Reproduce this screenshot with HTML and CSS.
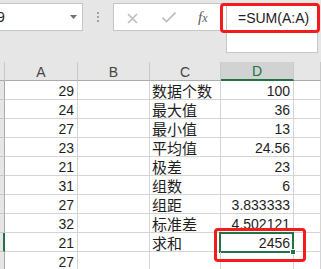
FILE: index.html
```html
<!DOCTYPE html>
<html lang="zh-CN">
  <head>
    <meta charset="UTF-8" />
    <title>SUM</title>
    <link rel="stylesheet" href="styles.css">
  </head>

  <body>
    <div class="toolbar">
      <div class="name-box">
        <span>D9</span>
        <svg class="arrow" width="7" height="4" viewBox="0 0 7 4"><polygon points="0,0 7,0 3.5,4" /></svg>
      </div>
      <div class="grip"><i></i><i></i><i></i></div>
      <div class="fx-box">
        <svg class="icon icon-cancel" width="11" height="11" viewBox="0 0 11 11"><path d="M1 1L10 10M10 1L1 10" /></svg>
        <svg class="icon icon-enter" width="14" height="11" viewBox="0 0 14 11"><path d="M0.5 5.5L4.5 9.5L13.5 0.5" /></svg>
        <span class="fx">f<small>x</small></span>
      </div>
      <div class="formula">=SUM(A:A)</div>
      <div class="mark mark-formula"></div>
    </div>

    <div class="sheet">
      <div class="head corner"></div>
      <div class="head col">A</div>
      <div class="head col">B</div>
      <div class="head col">C</div>
      <div class="head col active">D</div>
      <div class="head col"></div>

      <div class="head row"></div>
      <div class="cell num">29</div>
      <div class="cell"></div>
      <div class="cell text">数据个数</div>
      <div class="cell num">100</div>
      <div class="cell"></div>

      <div class="head row"></div>
      <div class="cell num">24</div>
      <div class="cell"></div>
      <div class="cell text">最大值</div>
      <div class="cell num">36</div>
      <div class="cell"></div>

      <div class="head row"></div>
      <div class="cell num">27</div>
      <div class="cell"></div>
      <div class="cell text">最小值</div>
      <div class="cell num">13</div>
      <div class="cell"></div>

      <div class="head row"></div>
      <div class="cell num">23</div>
      <div class="cell"></div>
      <div class="cell text">平均值</div>
      <div class="cell num">24.56</div>
      <div class="cell"></div>

      <div class="head row"></div>
      <div class="cell num">21</div>
      <div class="cell"></div>
      <div class="cell text">极差</div>
      <div class="cell num">23</div>
      <div class="cell"></div>

      <div class="head row"></div>
      <div class="cell num">31</div>
      <div class="cell"></div>
      <div class="cell text">组数</div>
      <div class="cell num">6</div>
      <div class="cell"></div>

      <div class="head row"></div>
      <div class="cell num">27</div>
      <div class="cell"></div>
      <div class="cell text">组距</div>
      <div class="cell num">3.833333</div>
      <div class="cell"></div>

      <div class="head row"></div>
      <div class="cell num">32</div>
      <div class="cell"></div>
      <div class="cell text">标准差</div>
      <div class="cell num">4.502121</div>
      <div class="cell"></div>

      <div class="head row active"></div>
      <div class="cell num">21</div>
      <div class="cell"></div>
      <div class="cell text">求和</div>
      <div class="cell num selected">
        2456
        <span class="handle"></span>
        <span class="mark mark-cell"></span>
      </div>
      <div class="cell"></div>

      <div class="head row"></div>
      <div class="cell num">27</div>
      <div class="cell"></div>
      <div class="cell"></div>
      <div class="cell"></div>
      <div class="cell"></div>
    </div>
  </body>
</html>
```

FILE: styles.css
```css
* {
  box-sizing: border-box;
}

html,
body {
  margin: 0;
  height: 100%;
  overflow: hidden;
  background: #fff;
}

body {
  font-family: "Liberation Sans", "Noto Sans CJK SC", sans-serif;
  font-size: 14px;
  color: #1e1e1e;
}

/* formula bar */

.toolbar {
  position: relative;
  display: flex;
  align-items: flex-start;
  height: 62px;
  padding-top: 3px;
  background: #e6e6e6;
}

.name-box {
  display: flex;
  align-items: center;
  width: 103px;
  height: 28px;
  margin-left: -20px;
  padding-left: 6px;
  padding-right: 5px;
  line-height: 26px;
  background: #fff;
  border: 1px solid #c6c6c6;
}

.name-box .arrow {
  margin-left: auto;
  fill: #6f6f6f;
}

.grip {
  display: flex;
  flex-direction: column;
  gap: 2px;
  margin: 9px 14px 0;
}

.grip i {
  display: block;
  width: 2px;
  height: 2px;
  background: #a0a0a0;
}

.fx-box {
  display: flex;
  align-items: center;
  width: 113px;
  height: 28px;
  padding-left: 13px;
  background: #fff;
  border: 1px solid #c6c6c6;
  border-right: 0;
}

.icon {
  fill: none;
  stroke: #bdbdbd;
  stroke-width: 1.6;
}

.icon-cancel {
  margin-top: 2px;
}

.icon-enter {
  margin-left: 24px;
  margin-top: 1px;
}

.fx {
  margin-left: 22px;
  font-family: "Liberation Serif", serif;
  font-style: italic;
  font-size: 15px;
  color: #5a5a5a;
}

.fx small {
  font-size: 12px;
}

.formula {
  width: 92px;
  height: 50px;
  padding: 4px 0 0 11px;
  line-height: 21px;
  background: #fff;
  border: 1px solid #c6c6c6;
  color: #222;
}

.mark {
  position: absolute;
  border: 3px solid #f21c1c;
  border-radius: 4px;
}

.mark-formula {
  left: 220px;
  top: 3px;
  width: 100px;
  height: 30px;
}

/* grid */

.sheet {
  display: grid;
  grid-template-columns: 5px 73px 72px 71px 73px 1fr;
  grid-auto-rows: 19px;
}

.head {
  display: flex;
  align-items: flex-end;
  justify-content: center;
  line-height: 15px;
  background: #e6e6e6;
  color: #444;
  border-right: 1px solid #c9c9c9;
  border-bottom: 1px solid #ababab;
}

.head.col.active {
  background: #d2d2d2;
  color: #217346;
  border-bottom: 2px solid #217346;
}

.head.row {
  border-bottom-color: #c9c9c9;
  border-right-color: #ababab;
}

.head.row.active {
  border-right: 2px solid #217346;
}

.cell {
  position: relative;
  display: flex;
  align-items: flex-end;
  padding: 0 3px 0 2px;
  line-height: 15px;
  white-space: nowrap;
  border-right: 1px solid #d4d4d4;
  border-bottom: 1px solid #d4d4d4;
}

.cell.num {
  justify-content: flex-end;
}

.cell.text {
  font-size: 15px;
}

.cell.selected::before {
  content: "";
  position: absolute;
  left: -2px;
  top: -1px;
  right: -1px;
  bottom: -2px;
  border: 2px solid #217346;
}

.handle {
  position: absolute;
  right: -3px;
  bottom: -4px;
  width: 6px;
  height: 6px;
  background: #217346;
  border: 1px solid #fff;
  z-index: 2;
}

.mark-cell {
  left: -7px;
  top: -5px;
  right: -13px;
  bottom: -11px;
  z-index: 3;
}
```
